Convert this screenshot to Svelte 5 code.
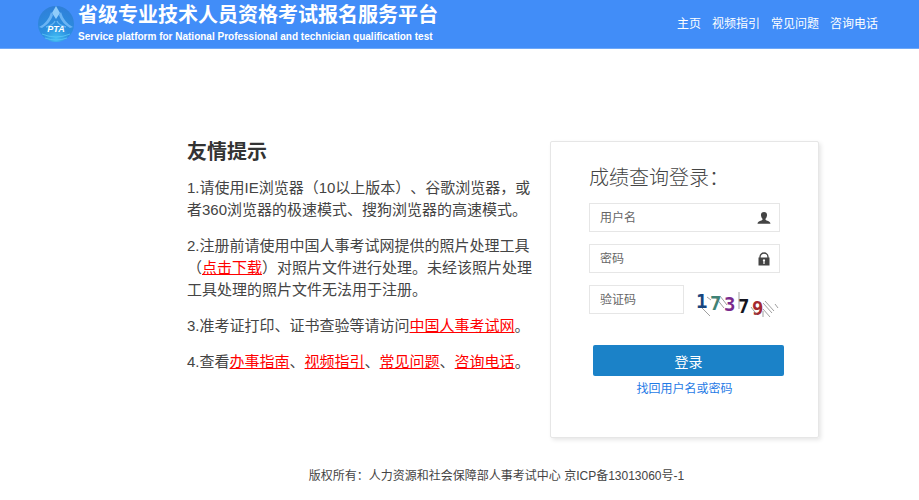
<script>
  let username = $state('');
  let password = $state('');
  let captcha = $state('');

  const navItems = ['主页', '视频指引', '常见问题', '咨询电话'];
  const guideLinks = ['办事指南', '视频指引', '常见问题', '咨询电话'];

  const digits = [
    { char: '1', x: 0, y: 23, color: '#17457e' },
    { char: '7', x: 14, y: 25, color: '#3f8375' },
    { char: '3', x: 28, y: 26, color: '#7a2a8c' },
    { char: '7', x: 42, y: 28, color: '#15151f' },
    { char: '9', x: 56, y: 30, color: '#a3282f' }
  ];

  function handleSubmit(event) {
    event.preventDefault();
  }
</script>

<div class="page">
  <header class="header">
    <div class="brand">
      <svg class="logo" viewBox="0 0 38 38" aria-hidden="true">
        <defs>
          <radialGradient id="globe" cx="50%" cy="90%" r="90%">
            <stop offset="0%" stop-color="#43bdf2" />
            <stop offset="40%" stop-color="#2b8fe0" />
            <stop offset="100%" stop-color="#2f7fd8" />
          </radialGradient>
        </defs>
        <circle cx="19" cy="19" r="18" fill="url(#globe)" />
        <path d="M19 1 L23 8 L19 14 L15 8 Z" fill="#8fccfa" />
        <path d="M14 7 C12 14 8 19 2 22 L5 23 C10 20 14 16 16 10 Z" fill="#6bb4f4" />
        <path d="M24 7 C26 14 30 19 36 22 L33 23 C28 20 24 16 22 10 Z" fill="#6bb4f4" />
        <path d="M18 16 C17 19 13 21 9 22 M20 16 C21 19 25 21 29 22" fill="none" stroke="#62b3f2" stroke-width="1.3" />
        <path d="M5 29 Q19 35 33 29 M8 33 Q19 37 30 33" fill="none" stroke="#5cc8f8" stroke-width="0.8" />
        <text class="logo-text" x="19" y="27" text-anchor="middle">PTA</text>
      </svg>
      <div>
        <h1 class="title">省级专业技术人员资格考试报名服务平台</h1>
        <p class="subtitle">Service platform for National Professional and technician qualification test</p>
      </div>
    </div>
    <nav class="nav">
      {#each navItems as item}
        <a href="#top">{item}</a>
      {/each}
    </nav>
  </header>

  <main class="main">
    <section class="tips">
      <h2>友情提示</h2>
      <p>1.请使用IE浏览器（10以上版本）、谷歌浏览器，或者360浏览器的极速模式、搜狗浏览器的高速模式。</p>
      <p>2.注册前请使用中国人事考试网提供的照片处理工具（<a href="#download">点击下载</a>）对照片文件进行处理。未经该照片处理工具处理的照片文件无法用于注册。</p>
      <p>3.准考证打印、证书查验等请访问<a href="#cpta">中国人事考试网</a>。</p>
      <p>4.查看{#each guideLinks as link, i}{#if i > 0}、{/if}<a href="#guide">{link}</a>{/each}。</p>
    </section>

    <form class="card" onsubmit={handleSubmit}>
      <h2>成绩查询登录：</h2>

      <div class="field">
        <input type="text" placeholder="用户名" aria-label="用户名" bind:value={username} />
        <svg class="field-icon" viewBox="0 0 14 14" aria-hidden="true">
          <path d="M7 1 C9.2 1 10.3 2.3 10 4.6 C9.8 6.1 9.2 7.2 8.5 7.8 V8.8 C9.2 9.8 13.2 9.8 13.5 12.8 H0.5 C0.8 9.8 4.8 9.8 5.5 8.8 V7.8 C4.8 7.2 4.2 6.1 4 4.6 C3.7 2.3 4.8 1 7 1 Z" fill="#444" />
        </svg>
      </div>

      <div class="field">
        <input type="password" placeholder="密码" aria-label="密码" bind:value={password} />
        <svg class="field-icon" viewBox="0 0 14 14" aria-hidden="true">
          <path d="M3 6 V5 A4 4 0 0 1 11 5 V6" fill="none" stroke="#444" stroke-width="1.3" />
          <rect x="1.5" y="5.5" width="11" height="8" fill="#444" />
          <path d="M7 7.2 a1.2 1.2 0 0 1 .6 2.2 V12 H6.4 V9.4 A1.2 1.2 0 0 1 7 7.2 Z" fill="#fff" />
        </svg>
      </div>

      <div class="captcha-row">
        <input type="text" placeholder="验证码" aria-label="验证码" bind:value={captcha} />
        <svg class="captcha" viewBox="0 0 84 34" role="img" aria-label="验证码图片">
          {#each digits as digit}
            <text class="digit" x={digit.x} y={digit.y} fill={digit.color}>{digit.char}</text>
          {/each}
          <g fill="none" stroke="#777" stroke-width="0.7">
            <path d="M6 23 L14 31 M11 12 L15 15 M20 13 L28 23 M24 11 L31 20" />
            <path d="M43 7 V24 M55 22 L61 30" />
            <path d="M67 18 L76 28 M69 16 L78 26 M67 24 L74 32 M67 26 V32 M79 19 L82 23" />
          </g>
        </svg>
      </div>

      <button type="submit">登录</button>
      <a class="forgot" href="#forgot">找回用户名或密码</a>
    </form>
  </main>

  <footer class="footer">版权所有：人力资源和社会保障部人事考试中心 京ICP备13013060号-1</footer>
</div>

<style>
  :global(body) {
    margin: 0;
    background: #fff;
  }

  .page {
    font-family: 'Liberation Sans', 'Noto Sans CJK SC', sans-serif;
    font-size: 12px;
    color: #444;
    text-spacing-trim: space-all;
  }

  h1,
  h2,
  p {
    margin: 0;
  }

  .header {
    display: flex;
    align-items: center;
    justify-content: space-between;
    height: 48px;
    padding: 0 41px 0 37px;
    background: #418df8;
    border-bottom: 1px solid #6ea8f8;
    color: #fff;
  }

  .brand {
    display: flex;
    align-items: center;
    gap: 3px;
  }

  .logo {
    width: 38px;
    height: 38px;
  }

  .logo-text {
    font-size: 9px;
    font-weight: bold;
    font-style: italic;
    fill: #fff;
  }

  .title {
    font-size: 20px;
    line-height: 26px;
    font-weight: bold;
    white-space: nowrap;
  }

  .subtitle {
    font-size: 10px;
    line-height: 18px;
    font-weight: bold;
    white-space: nowrap;
  }

  .nav {
    display: flex;
    gap: 11px;
  }

  .nav a {
    color: #fff;
    line-height: 18px;
    text-decoration: none;
    white-space: nowrap;
  }

  .main {
    display: flex;
    align-items: flex-start;
    gap: 16px;
    padding: 92px 100px 0 187px;
  }

  .tips {
    flex: 1;
    font-size: 15px;
    line-height: 22px;
  }

  .tips h2 {
    font-size: 20px;
    line-height: 22px;
    color: #333;
  }

  .tips p {
    margin-top: 14px;
  }

  .tips a {
    color: #f00;
  }

  .card {
    box-sizing: border-box;
    width: 269px;
    padding: 22px 38px 39px;
    border: 1px solid #e6e6e6;
    border-radius: 2px;
    box-shadow: 2px 2px 4px rgba(0, 0, 0, 0.1);
  }

  .card h2 {
    margin-bottom: 11px;
    font-size: 20px;
    line-height: 28px;
    font-weight: 300;
  }

  .field {
    position: relative;
    margin-bottom: 12px;
  }

  input {
    box-sizing: border-box;
    display: block;
    width: 100%;
    height: 29px;
    padding: 0 10px;
    border: 1px solid #e6e6e6;
    border-radius: 0;
    background: #fff;
    font: inherit;
    color: #444;
  }

  input::placeholder {
    color: #666;
    opacity: 1;
  }

  .field-icon {
    position: absolute;
    top: 8px;
    right: 9px;
    width: 14px;
    height: 14px;
  }

  .captcha-row {
    display: flex;
    gap: 12px;
  }

  .captcha-row input {
    flex: 1;
    min-width: 0;
  }

  .captcha {
    width: 84px;
    height: 34px;
  }

  .digit {
    font-family: 'DejaVu Sans Mono', monospace;
    font-size: 19px;
    font-weight: bold;
  }

  button {
    display: block;
    width: 100%;
    height: 31px;
    margin: 26px 0 4px 4px;
    padding: 0;
    border: 0;
    border-radius: 2px;
    background: #1b82c8;
    color: #fff;
    font: inherit;
    font-size: 14px;
    cursor: pointer;
  }

  .forgot {
    display: block;
    line-height: 18px;
    color: #1f7be6;
    text-align: center;
    text-decoration: none;
  }

  .footer {
    padding: 29px 62px 16px 136px;
    line-height: 18px;
    text-align: center;
  }
</style>
